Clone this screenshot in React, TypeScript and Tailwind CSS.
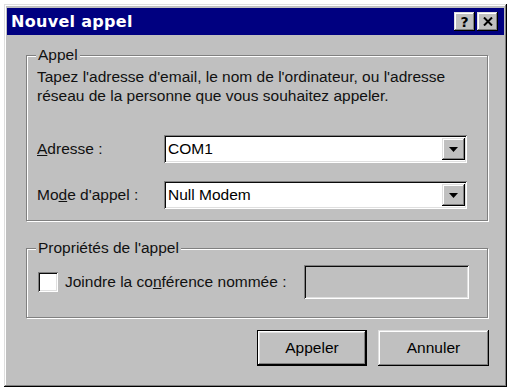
import React from 'react';

const raised =
  'shadow-[inset_-1px_-1px_#000,inset_1px_1px_#dfdfdf,inset_-2px_-2px_#808080,inset_2px_2px_#fff]';
const sunken =
  'shadow-[inset_1px_1px_#808080,inset_-1px_-1px_#fff,inset_2px_2px_#0a0a0a,inset_-2px_-2px_#dfdfdf]';

function DropArrow() {
  return (
    <div className={`w-[23px] h-[22px] bg-[#c0c0c0] flex items-center justify-center ${raised}`}>
      <svg width="9" height="5" viewBox="0 0 9 5">
        <path d="M0 0h9L4.5 5z" fill="#000" />
      </svg>
    </div>
  );
}

function Combo({ value }: { value: string }) {
  return (
    <div className={`w-[303px] h-[28px] bg-white flex items-center pl-[4px] pr-[2px] ${sunken}`}>
      <span className="flex-1 text-[15.5px] text-black">{value}</span>
      <DropArrow />
    </div>
  );
}

export default function App() {
  return (
    <div className="w-[512px] h-[390px] bg-white p-[4px] font-['Liberation_Sans',Arial,sans-serif] text-[15.5px] text-[#111]">
      <div className={`w-[503px] h-[383px] bg-[#c0c0c0] pt-[4px] px-[3px] flex flex-col ${raised}`}>
        {/* Title bar */}
        <div className="h-[27px] bg-[#000080] flex items-center pl-[4px] pr-[6px]">
          <span className="text-white font-bold text-[16px] font-['DejaVu_Sans',sans-serif] tracking-[0.3px]">
            Nouvel appel
          </span>
          <div className="ml-auto flex gap-[2px]">
            <div className={`w-[21px] h-[19px] bg-[#c0c0c0] flex items-center justify-center ${raised}`}>
              <span className="font-bold text-[14px] leading-none text-black font-['DejaVu_Sans',sans-serif]">?</span>
            </div>
            <div className={`w-[21px] h-[19px] bg-[#c0c0c0] flex items-center justify-center ${raised}`}>
              <svg width="10" height="9" viewBox="0 0 10 9">
                <path d="M1 0.5L9 8.5M9 0.5L1 8.5" stroke="#000" strokeWidth="2" />
              </svg>
            </div>
          </div>
        </div>

        {/* Group: Appel */}
        <fieldset className="ml-[19px] mt-[11px] w-[462px] border border-[#808080] shadow-[1px_1px_0_#fff,inset_1px_1px_0_#fff] pl-[10px] pt-[3px] pb-[11px]">
          <legend className="-ml-[1px] px-[2px] bg-[#c0c0c0] leading-[18px]">Appel</legend>
          <p className="leading-[19px]">
            Tapez l'adresse d'email, le nom de l'ordinateur, ou l'adresse
            <br />
            réseau de la personne que vous souhaitez appeler.
          </p>
          <div className="mt-[30px] flex flex-col gap-[18px]">
            <div className="flex items-center">
              <span className="w-[127px]">
                <u>A</u>dresse :
              </span>
              <Combo value="COM1" />
            </div>
            <div className="flex items-center">
              <span className="w-[127px]">
                Mo<u>d</u>e d'appel :
              </span>
              <Combo value="Null Modem" />
            </div>
          </div>
        </fieldset>

        {/* Group: Propriétés */}
        <fieldset className="ml-[19px] mt-[18px] w-[462px] border border-[#808080] shadow-[1px_1px_0_#fff,inset_1px_1px_0_#fff] pl-[11px] pt-[8px] pb-[18px]">
          <legend className="-ml-[2px] px-[2px] bg-[#c0c0c0] leading-[18px]">Propriétés de l'appel</legend>
          <div className="flex items-center">
            <div className={`w-[20px] h-[20px] bg-white ${sunken}`} />
            <span className="ml-[7px] w-[239px]">
              Joindre la co<u>n</u>férence nommée :
            </span>
            <div className={`w-[165px] h-[34px] bg-[#c0c0c0] ${sunken}`} />
          </div>
        </fieldset>

        {/* Buttons */}
        <div className="mt-[12px] flex justify-end gap-[11px] pr-[15px]">
          <button className="w-[110px] h-[36px] bg-[#c0c0c0] border border-black shadow-[inset_-1px_-1px_#000,inset_1px_1px_#fff,inset_-2px_-2px_#808080,inset_2px_2px_#dfdfdf] text-black">
            Appeler
          </button>
          <button className={`w-[111px] h-[36px] bg-[#c0c0c0] text-black ${raised}`}>Annuler</button>
        </div>
      </div>
    </div>
  );
}
